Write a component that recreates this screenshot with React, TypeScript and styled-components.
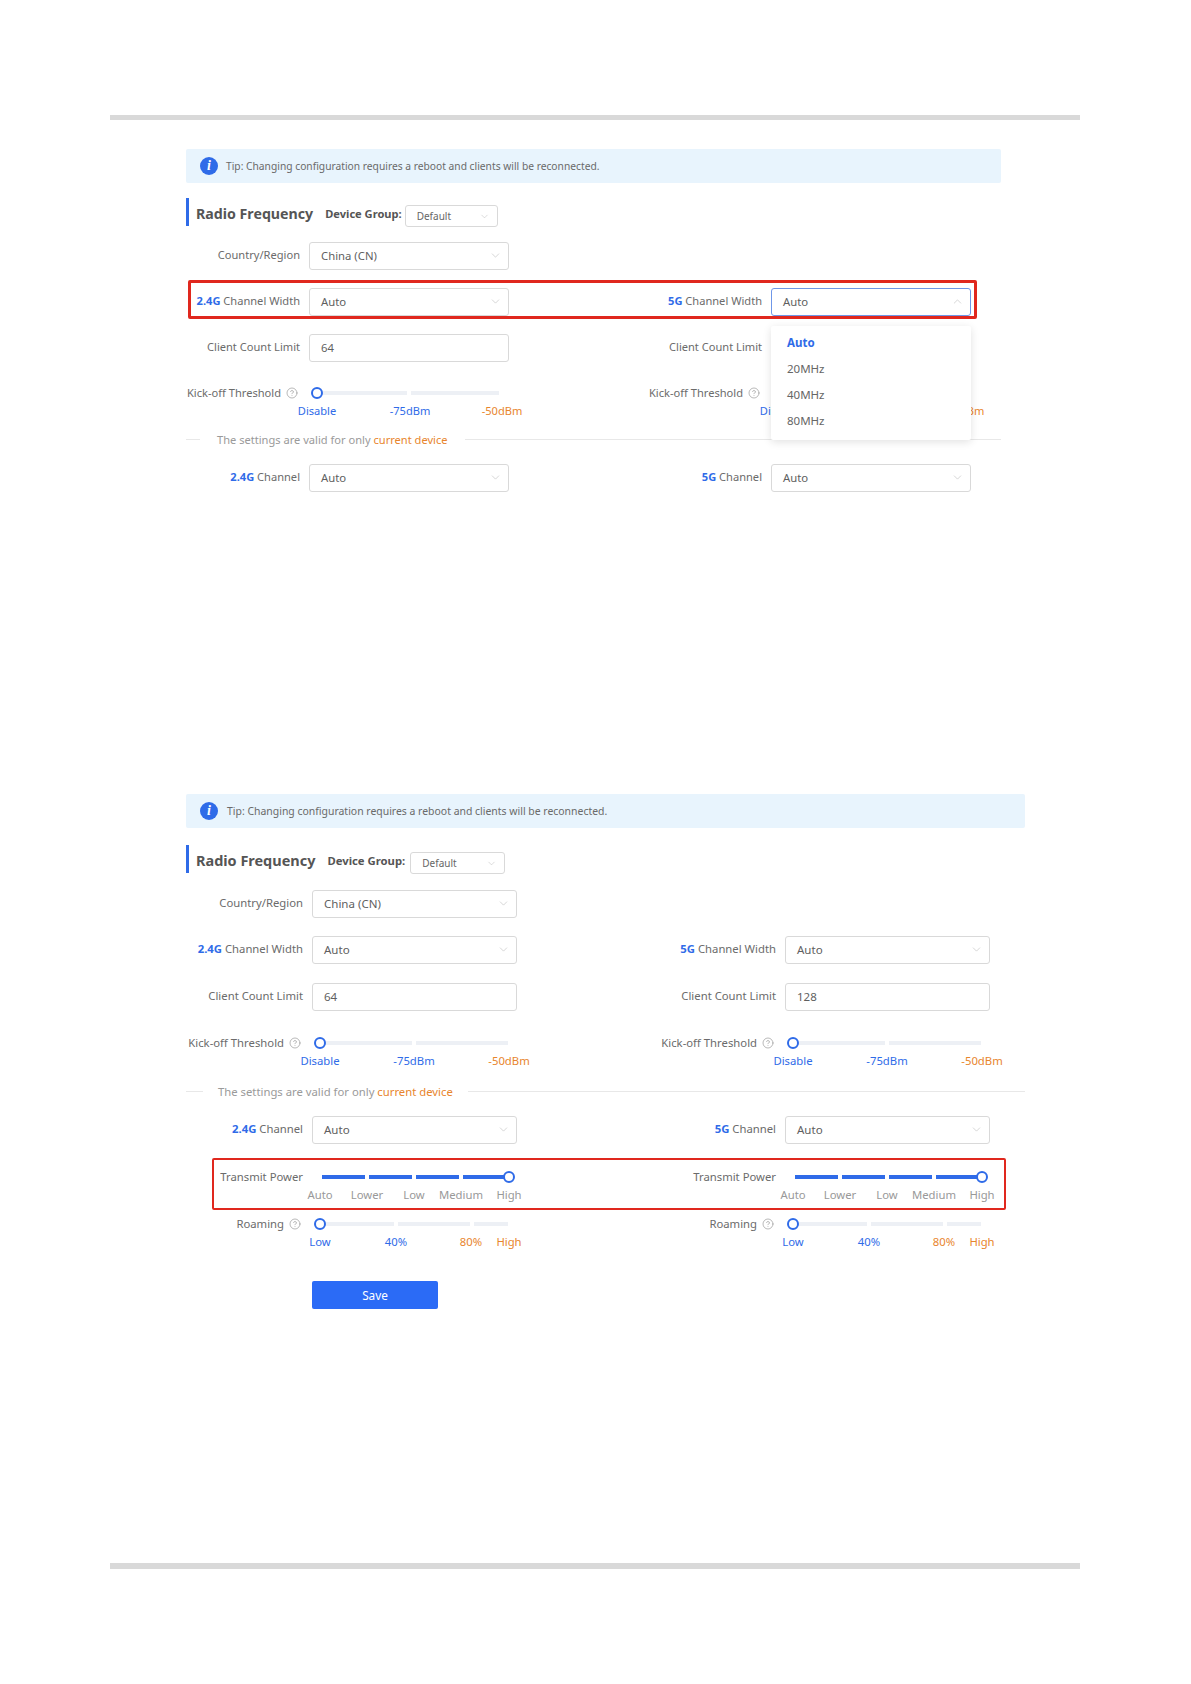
import React from "react";
import styled, { createGlobalStyle } from "styled-components";
import { ChevronDown, ChevronUp, CircleHelp } from "lucide-react";

const Global = createGlobalStyle`
  html, body { margin: 0; padding: 0; background: #fff; }
  body { font-family: "Noto Sans", "Open Sans", Arial, sans-serif; }
`;

const BLUE = "#2f6be8";
const ORANGE = "#e8852d";

const Page = styled.div`
  width: 1191px;
  height: 1684px;
  padding-top: 115px;
  box-sizing: border-box;
  overflow: hidden;
`;
const Rule = styled.div<{ $top?: number; $h: number }>`
  margin: ${(p) => p.$top ?? 0}px 0 0 110px;
  width: 970px;
  height: ${(p) => p.$h}px;
  background: #d9d9d9;
`;
const Figure = styled.section<{ $top: number; $w: number; $label: number; $ctrl: number; $mid: number; $fs: number }>`
  margin: ${(p) => p.$top}px 0 0 186px;
  width: ${(p) => p.$w}px;
  --label: ${(p) => p.$label}px;
  --ctrl: ${(p) => p.$ctrl}px;
  --mid: ${(p) => p.$mid}px;
  font-size: ${(p) => p.$fs}px;
  color: #666;
`;
const Tip = styled.div<{ $textLeft: number }>`
  height: 34px;
  display: flex;
  align-items: center;
  gap: ${(p) => p.$textLeft}px;
  padding-left: 14px;
  background: #e8f4fd;
  border-radius: 2px;
  font-size: 0.925em;
  color: #6a6a6a;
`;
const TipBadge = styled.span`
  width: 18px;
  height: 18px;
  border-radius: 50%;
  background: ${BLUE};
  color: #fff;
  display: flex;
  align-items: center;
  justify-content: center;
  font: italic bold 14px "Liberation Serif", serif;
`;
const Heading = styled.div<{ $top: number }>`
  margin-top: ${(p) => p.$top}px;
  height: 28px;
  border-left: 3px solid ${BLUE};
  box-sizing: border-box;
  padding-left: 7px;
  display: flex;
  align-items: center;
`;
const HeadingTitle = styled.h2`
  margin: 3px 12px 0 0;
  font-size: 1.28em;
  font-weight: 700;
  color: #555;
  white-space: nowrap;
`;
const GroupLabel = styled.span<{ $gap: number }>`
  margin: 3px ${(p) => p.$gap}px 0 0;
  font-size: 1em;
  font-weight: 700;
  color: #555;
  white-space: nowrap;
`;
const GroupSelect = styled.div<{ $w: number }>`
  width: ${(p) => p.$w}px;
  height: 22px;
  margin-top: 8px;
  box-sizing: border-box;
  border: 1px solid #d9d9d9;
  border-radius: 3px;
  padding: 0 7px 0 11px;
  display: flex;
  align-items: center;
  justify-content: space-between;
  font-size: 10px;
  color: #666;
`;
const Row = styled.div<{ $top: number }>`
  position: relative;
  margin-top: ${(p) => p.$top}px;
  display: grid;
  grid-template-columns: var(--label) var(--ctrl) var(--mid) var(--ctrl);
  column-gap: 9px;
  align-items: center;
`;
const SliderRow = styled(Row)`
  align-items: start;
`;
const Label = styled.label`
  text-align: right;
  white-space: nowrap;
  line-height: 12px;
  padding-bottom: 2px;
  color: #6b6b6b;
`;
const Band = styled.b`
  color: ${BLUE};
  font-weight: 700;
`;
const Help = styled(CircleHelp)`
  margin: 0 2px 0 5px;
  vertical-align: -2px;
  color: #8a8a8a;
`;
const Cell = styled.div`
  position: relative;
`;
const Box = styled.div<{ $open?: boolean }>`
  height: 28px;
  box-sizing: border-box;
  border: 1px solid ${(p) => (p.$open ? "#6f97e8" : "#d9d9d9")};
  border-radius: 3px;
  padding: 0 6px 2px 11px;
  display: flex;
  align-items: center;
  justify-content: space-between;
  font-size: 1.02em;
  color: #5f5f5f;
  background: #fff;
`;
const Chevron = styled(ChevronDown)`
  color: #b5b5b5;
`;
const ChevronOpen = styled(ChevronUp)`
  color: #b5b5b5;
`;
const Menu = styled.ul`
  position: absolute;
  z-index: 3;
  top: 38px;
  left: 0;
  right: 0;
  margin: 0;
  padding: 4px 0 6px;
  list-style: none;
  background: #fff;
  border-radius: 2px;
  box-shadow: 0 2px 8px rgba(0, 0, 0, 0.12);
  font-size: 11.5px;
`;
const MenuItem = styled.li<{ $active?: boolean }>`
  height: 26px;
  line-height: 26px;
  padding-left: 16px;
  font-weight: ${(p) => (p.$active ? 700 : 400)};
  color: ${(p) => (p.$active ? BLUE : "#666")};
`;
const Highlight = styled.div<{ $l: number; $r: number; $t: number; $b: number; $bw: number }>`
  position: absolute;
  z-index: 2;
  left: ${(p) => p.$l}px;
  right: ${(p) => p.$r}px;
  top: ${(p) => p.$t}px;
  bottom: ${(p) => p.$b}px;
  border: ${(p) => p.$bw}px solid #e0281e;
  border-radius: 2px;
  pointer-events: none;
`;
const Track = styled.div<{ $start: number }>`
  position: relative;
  height: 12px;
  padding-left: ${(p) => p.$start}px;
  display: flex;
  align-items: center;
  gap: 4px;
`;
const Segment = styled.span<{ $w: number; $on?: boolean }>`
  width: ${(p) => p.$w}px;
  height: 4px;
  background: ${(p) => (p.$on ? BLUE : "#edf0f5")};
`;
const Thumb = styled.span<{ $x: number }>`
  position: absolute;
  top: 0;
  left: ${(p) => p.$x - 6}px;
  width: 12px;
  height: 12px;
  box-sizing: border-box;
  border: 2px solid ${BLUE};
  border-radius: 50%;
  background: #fff;
`;
const Stops = styled.div<{ $gap: number }>`
  margin-top: ${(p) => p.$gap}px;
  height: 14px;
  display: flex;
  padding-left: 8px;
`;
const Stop = styled.span<{ $gap: number; $color: string }>`
  margin-left: ${(p) => p.$gap}px;
  width: 0;
  display: flex;
  justify-content: center;
  white-space: nowrap;
  line-height: 14px;
  color: ${(p) => p.$color};
`;
const Divider = styled.div<{ $top: number; $lead: number; $gap: number }>`
  margin-top: ${(p) => p.$top}px;
  height: 18px;
  display: flex;
  align-items: center;
  gap: ${(p) => p.$gap}px;
  white-space: nowrap;
  color: #9a9a9a;
  &::before {
    content: "";
    width: ${(p) => p.$lead}px;
    height: 1px;
    background: #e8e8e8;
  }
  &::after {
    content: "";
    flex: 1;
    height: 1px;
    background: #e8e8e8;
  }
`;
const Orange = styled.span`
  color: ${ORANGE};
`;
const SaveRow = styled.div`
  margin: 32px 0 0 126px;
`;
const Save = styled.button`
  width: 126px;
  height: 28px;
  border: 0;
  border-radius: 2px;
  background: #2b6bf6;
  color: #fff;
  font-family: inherit;
  font-size: 11.8px;
`;

type StopT = { t: string; at: number; c: string };
const S = (t: string, at: number, c: string = BLUE): StopT => ({ t, at, c });

function Slider({
  segs,
  stops,
  on,
  thumb = 8,
  start = 8,
  labelGap = 5,
}: {
  segs: number[];
  stops: StopT[];
  on?: boolean;
  thumb?: number;
  start?: number;
  labelGap?: number;
}) {
  return (
    <Cell>
      <Track $start={start}>
        {segs.map((w, i) => (
          <Segment key={i} $w={w} $on={on} />
        ))}
        <Thumb $x={thumb} />
      </Track>
      <Stops $gap={labelGap}>
        {stops.map((s, i) => (
          <Stop key={s.t} $gap={i === 0 ? 0 : s.at - stops[i - 1].at} $color={s.c}>
            {s.t}
          </Stop>
        ))}
      </Stops>
    </Cell>
  );
}

const Select = ({ value, children, open }: { value: string; children?: React.ReactNode; open?: boolean }) => (
  <Cell>
    <Box $open={open}>
      {value}
      {open ? <ChevronOpen size={13} strokeWidth={1} /> : <Chevron size={13} strokeWidth={1} />}
    </Box>
    {children}
  </Cell>
);
const Input = ({ value }: { value?: string }) => (
  <Cell>
    <Box>{value}</Box>
  </Cell>
);
const HelpLabel = ({ text }: { text: string }) => (
  <Label>
    {text}
    <Help size={12} strokeWidth={1.2} />
  </Label>
);

function Tipbar({ gap }: { gap: number }) {
  return (
    <Tip $textLeft={gap}>
      <TipBadge>i</TipBadge>
      <span>Tip: Changing configuration requires a reboot and clients will be reconnected.</span>
    </Tip>
  );
}

function HeadingBar({ top, selW, selGap }: { top: number; selW: number; selGap: number }) {
  return (
    <Heading $top={top}>
      <HeadingTitle>Radio Frequency</HeadingTitle>
      <GroupLabel $gap={selGap}>Device Group:</GroupLabel>
      <GroupSelect $w={selW}>
        Default
        <Chevron size={11} strokeWidth={1} />
      </GroupSelect>
    </Heading>
  );
}

export default function App() {
  const kick1 = [S("Disable", 0), S("-75dBm", 93), S("-50dBm", 185, ORANGE)];
  const kick2 = [S("Disable", 0), S("-75dBm", 94), S("-50dBm", 189, ORANGE)];
  const power = [S("Auto", 0, "#999"), S("Lower", 47, "#999"), S("Low", 94, "#999"), S("Medium", 141, "#999"), S("High", 189, "#999")];
  const roam = [S("Low", 0), S("40%", 76), S("80%", 151, ORANGE), S("High", 189, ORANGE)];
  return (
    <Page>
      <Global />
      <Rule $h={5} />

      <Figure $top={29} $w={815} $label={114} $ctrl={200} $mid={244} $fs={11.1}>
        <Tipbar gap={8} />
        <HeadingBar top={15} selW={93} selGap={3} />
        <Row $top={16}>
          <Label>Country/Region</Label>
          <Select value="China (CN)" />
        </Row>
        <Row $top={18}>
          <Highlight $l={2} $r={24} $t={-8} $b={-3} $bw={3} />
          <Label><Band>2.4G</Band> Channel Width</Label>
          <Select value="Auto" />
          <Label><Band>5G</Band> Channel Width</Label>
          <Select value="Auto" open>
            <Menu>
              <MenuItem $active>Auto</MenuItem>
              <MenuItem>20MHz</MenuItem>
              <MenuItem>40MHz</MenuItem>
              <MenuItem>80MHz</MenuItem>
            </Menu>
          </Select>
        </Row>
        <Row $top={18}>
          <Label>Client Count Limit</Label>
          <Input value="64" />
          <Label>Client Count Limit</Label>
          <Input />
        </Row>
        <SliderRow $top={25}>
          <HelpLabel text="Kick-off Threshold" />
          <Slider segs={[90, 88]} stops={kick1} />
          <HelpLabel text="Kick-off Threshold" />
          <Slider segs={[90, 88]} stops={kick1} />
        </SliderRow>
        <Divider $top={12} $lead={14} $gap={17}>
          <span>The settings are valid for only <Orange>current device</Orange></span>
        </Divider>
        <Row $top={16}>
          <Label><Band>2.4G</Band> Channel</Label>
          <Select value="Auto" />
          <Label><Band>5G</Band> Channel</Label>
          <Select value="Auto" />
        </Row>
      </Figure>

      <Figure $top={302} $w={839} $label={117} $ctrl={205} $mid={250} $fs={11.3}>
        <Tipbar gap={9} />
        <HeadingBar top={17} selW={95} selGap={5} />
        <Row $top={17}>
          <Label>Country/Region</Label>
          <Select value="China (CN)" />
        </Row>
        <Row $top={18}>
          <Label><Band>2.4G</Band> Channel Width</Label>
          <Select value="Auto" />
          <Label><Band>5G</Band> Channel Width</Label>
          <Select value="Auto" />
        </Row>
        <Row $top={19}>
          <Label>Client Count Limit</Label>
          <Input value="64" />
          <Label>Client Count Limit</Label>
          <Input value="128" />
        </Row>
        <SliderRow $top={26}>
          <HelpLabel text="Kick-off Threshold" />
          <Slider segs={[92, 92]} stops={kick2} />
          <HelpLabel text="Kick-off Threshold" />
          <Slider segs={[92, 92]} stops={kick2} />
        </SliderRow>
        <Divider $top={14} $lead={17} $gap={15}>
          <span>The settings are valid for only <Orange>current device</Orange></span>
        </Divider>
        <Row $top={16}>
          <Label><Band>2.4G</Band> Channel</Label>
          <Select value="Auto" />
          <Label><Band>5G</Band> Channel</Label>
          <Select value="Auto" />
        </Row>
        <SliderRow $top={27}>
          <Highlight $l={26} $r={19} $t={-13} $b={-8} $bw={2} />
          <Label>Transmit Power</Label>
          <Slider segs={[43, 43, 43, 45]} stops={power} on thumb={197} start={10} labelGap={5} />
          <Label>Transmit Power</Label>
          <Slider segs={[43, 43, 43, 45]} stops={power} on thumb={197} start={10} labelGap={5} />
        </SliderRow>
        <SliderRow $top={16}>
          <HelpLabel text="Roaming" />
          <Slider segs={[74, 72, 34]} stops={roam} />
          <HelpLabel text="Roaming" />
          <Slider segs={[74, 72, 34]} stops={roam} />
        </SliderRow>
        <SaveRow>
          <Save>Save</Save>
        </SaveRow>
      </Figure>

      <Rule $top={254} $h={6} />
    </Page>
  );
}
